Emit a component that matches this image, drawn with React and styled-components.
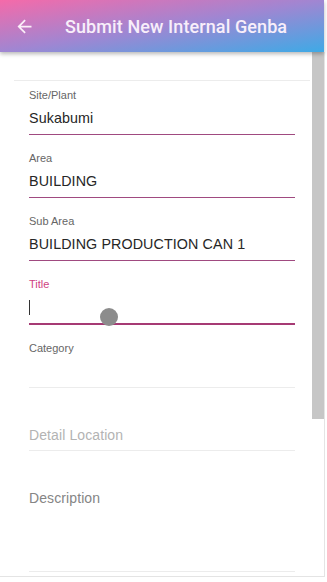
import React from "react";
import styled, { createGlobalStyle } from "styled-components";

const Global = createGlobalStyle`
  html, body { margin: 0; padding: 0; background: #ffffff; }
  body { font-family: "Liberation Sans", Arial, sans-serif; overflow: hidden; }
  * { box-sizing: border-box; }
`;

const Page = styled.div`
  position: relative;
  width: 327px;
  height: 582px;
  background: #ffffff;
`;

const Header = styled.header`
  position: relative;
  z-index: 2;
  width: 324px;
  height: 52px;
  display: flex;
  align-items: center;
  background: linear-gradient(to bottom right, #f56aa9 0%, #a086d2 50%, #3eaae6 100%);
  box-shadow: 0 2px 4px rgba(0, 0, 0, 0.28);
`;

const BackButton = styled.button`
  width: 50px;
  height: 52px;
  padding: 0 0 0 14px;
  border: 0;
  background: transparent;
  display: flex;
  align-items: center;
  color: #fbeef8;
`;

const Title = styled.h1`
  margin: 0 0 0 15px;
  font-family: Roboto, "Liberation Sans", Arial, sans-serif;
  font-size: 18px;
  font-weight: 500;
  color: #f8eefa;
  letter-spacing: 0.1px;
`;

const Body = styled.div`
  position: relative;
  width: 325px;
  height: 525px;
`;

const ScrollArea = styled.main`
  width: 325px;
  height: 525px;
  overflow-y: scroll;
  padding-right: 12px;
  border-right: 1px solid #e4e4e4;
  border-bottom: 1px solid #e4e4e4;
  scrollbar-width: none;
  &::-webkit-scrollbar { display: none; }
`;

const ScrollThumb = styled.div`
  position: absolute;
  top: 0;
  right: 1px;
  width: 12px;
  height: 367px;
  background: #c6c6c6;
`;

const Card = styled.form`
  width: 296px;
  margin: 28px 0 0 14px;
  min-height: 720px;
  border-top: 1px solid #ececec;
  padding: 0 15px;
`;

const Field = styled.div`
  display: flex;
  flex-direction: column;
  padding: 17px 0 6px;
  border-bottom: ${(p) => (p.$focused ? "2px" : "1px")} solid
    ${(p) => (p.$filled ? "#a04a80" : p.$focused ? "#a63a74" : "#ececec")};
  &:first-child { padding-top: 8px; }
`;

const Label = styled.label`
  height: 13px;
  margin-bottom: 6px;
  font-size: 11px;
  line-height: 13px;
  color: ${(p) => (p.$focused ? "#cf3f82" : "#666666")};
`;

const Value = styled.div`
  height: ${(p) => p.$height || 20}px;
  font-size: 14.3px;
  line-height: 20px;
  color: #262626;
  letter-spacing: 0.1px;
  display: flex;
  align-items: ${(p) => (p.$top ? "flex-start" : "center")};
`;

const Placeholder = styled.span`
  font-size: 14px;
  margin-top: ${(p) => p.$shift || 0}px;
  color: ${(p) => (p.$dark ? "#858585" : "#b3b3b3")};
`;

const Caret = styled.span`
  display: inline-block;
  width: 1px;
  height: 15px;
  background: #333333;
`;

const TouchDot = styled.div`
  position: absolute;
  left: 100px;
  top: 308px;
  width: 18px;
  height: 18px;
  border-radius: 50%;
  background: #8c8c8c;
  z-index: 3;
`;

const BackIcon = () => (
  <svg width="21" height="21" viewBox="0 0 24 24" aria-hidden="true">
    <path
      d="M20 11H7.83l5.59-5.59L12 4l-8 8 8 8 1.41-1.41L7.83 13H20v-2z"
      fill="currentColor"
    />
  </svg>
);

const fields = [
  { label: "Site/Plant", value: "Sukabumi" },
  { label: "Area", value: "BUILDING" },
  { label: "Sub Area", value: "BUILDING PRODUCTION CAN 1" },
];

export default function App() {
  return (
    <Page>
      <Global />
      <Header>
        <BackButton type="button" aria-label="Back">
          <BackIcon />
        </BackButton>
        <Title>Submit New Internal Genba</Title>
      </Header>
      <Body>
        <ScrollArea>
          <Card onSubmit={(e) => e.preventDefault()}>
            {fields.map((f) => (
              <Field key={f.label} $filled>
                <Label>{f.label}</Label>
                <Value>{f.value}</Value>
              </Field>
            ))}
            <Field $focused>
              <Label $focused>Title</Label>
              <Value>
                <Caret />
              </Value>
            </Field>
            <Field>
              <Label>Category</Label>
              <Value />
            </Field>
            <Field>
              <Label />
              <Value>
                <Placeholder $shift={2}>Detail Location</Placeholder>
              </Value>
            </Field>
            <Field>
              <Label />
              <Value $height={78} $top>
                <Placeholder $dark $shift={1}>Description</Placeholder>
              </Value>
            </Field>
          </Card>
        </ScrollArea>
        <ScrollThumb />
      </Body>
      <TouchDot />
    </Page>
  );
}
